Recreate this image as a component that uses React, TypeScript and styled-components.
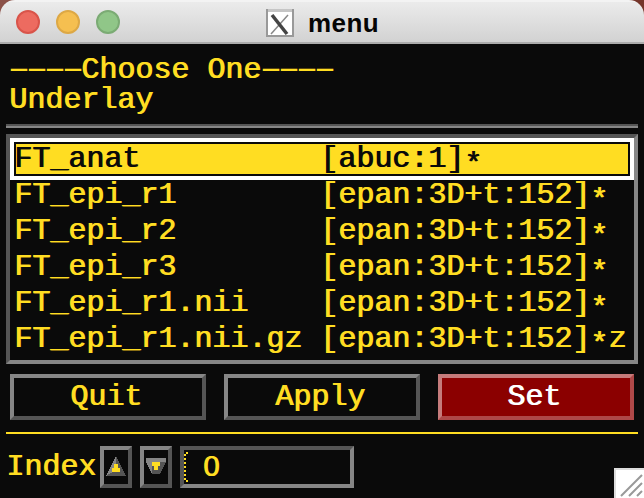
import React from "react";
import styled, { createGlobalStyle, css } from "styled-components";

const INK = "#ffdd22";
const BASE = "#0a0a0a";
const LIGHT = "#868686";
const SHADE = "#555555";

const Global = createGlobalStyle`
  * { box-sizing: border-box; }
  html, body { margin: 0; background: ${BASE}; overflow: hidden; }
`;

const raised = css`
  border: 4px solid;
  border-color: ${LIGHT} ${SHADE} ${SHADE} ${LIGHT};
`;

const sunken = css`
  border: 4px solid;
  border-color: ${SHADE} ${LIGHT} ${LIGHT} ${SHADE};
`;

const Window = styled.main`
  position: relative;
  display: flex;
  flex-direction: column;
  width: 644px;
  height: 498px;
  background: ${BASE};
  color: ${INK};
  font: 30px/30px "Liberation Mono", monospace;
  text-shadow: 1px 0 currentColor;
  white-space: pre;
`;

const Desktop = styled.div`
  flex: none;
  background: linear-gradient(90deg, #8b5148 0 50%, #75352a 50%);
`;

const TitleBar = styled.header`
  display: flex;
  align-items: center;
  height: 44px;
  padding-left: 16px;
  border-bottom: 2px solid #acacac;
  border-radius: 15px 15px 0 0;
  background: linear-gradient(#f3f3f3 0 2px, #ebebeb 2px, #d2d2d2 100%);
`;

const Light = styled.span<{ $fill: string; $edge: string }>`
  width: 24px;
  height: 24px;
  margin: 2px 16px 0 0;
  border: 2px solid ${(p) => p.$edge};
  border-radius: 50%;
  background: ${(p) => p.$fill};
`;

const AppIcon = styled.svg`
  margin: 4px 14px 0 130px;
`;

const Title = styled.h1`
  margin: 4px 0 0;
  color: #050505;
  font: bold 26px/30px "Liberation Sans", sans-serif;
  letter-spacing: 0.4px;
  text-shadow: none;
`;

const Prompt = styled.div`
  height: 80px;
  padding: 11px 0 0 9px;
`;

const Dashes = styled.span`
  display: inline-block;
  width: 36px;
  height: 30px;
  margin-right: 36px;
  vertical-align: top;
  letter-spacing: -9px;
  text-indent: -4px;
  text-shadow: none;
  transform: scaleX(2);
  transform-origin: left;
`;

const Groove = styled.hr`
  flex: none;
  width: 632px;
  height: 4px;
  margin: 0 6px 6px;
  border: 0;
  background: linear-gradient(${SHADE} 50%, ${LIGHT} 50%);
`;

const List = styled.div`
  height: 230px;
  margin: 0 6px 10px;
  ${sunken}
`;

const Row = styled.div<{ $selected?: boolean }>`
  height: 36px;
  padding: 0 0 0 4px;
  ${(p) =>
    p.$selected &&
    css`
      height: 42px;
      padding: 0;
      border: 4px solid #fff;
      background: ${INK};
      color: ${BASE};
      box-shadow: inset 0 0 0 2px ${BASE};
      line-height: 34px;
    `}
`;

const Star = styled.span`
  line-height: 0;
  vertical-align: -6px;
`;

const Actions = styled.div`
  display: flex;
  gap: 18px;
  padding: 0 10px;
`;

const Action = styled.button<{ $primary?: boolean }>`
  width: 196px;
  height: 46px;
  padding: 0 4px 0 0;
  ${raised}
  background: ${BASE};
  color: ${INK};
  font: inherit;
  text-shadow: inherit;
  ${(p) =>
    p.$primary &&
    css`
      border-color: #c57b7b #ae4848 #ae4848 #c57b7b;
      background: #8b0000;
      color: #fff;
      text-shadow: 1px 0 #fff;
    `}
`;

const Rule = styled.hr`
  flex: none;
  width: 632px;
  height: 2px;
  margin: 12px 6px;
  border: 0;
  background: ${INK};
`;

const IndexRow = styled.div`
  display: flex;
  gap: 8px;
  padding-left: 6px;
`;

const Label = styled.label`
  width: 86px;
  padding-top: 6px;
`;

const Step = styled.button`
  width: 32px;
  height: 42px;
  padding: 0;
  ${raised}
  background: ${BASE};
  svg { display: block; }
`;

const Field = styled.div`
  display: flex;
  width: 174px;
  height: 42px;
  ${sunken}
`;

const Digit = styled.span`
  padding: 1px 0 0 15px;
  font-family: "Liberation Sans", sans-serif;
  font-size: 29px;
`;

const Grip = styled.svg`
  position: absolute;
  right: 0;
  bottom: 0;
`;

const rows = [
  ["FT_anat", "[abuc:1]", ""],
  ["FT_epi_r1", "[epan:3D+t:152]", ""],
  ["FT_epi_r2", "[epan:3D+t:152]", ""],
  ["FT_epi_r3", "[epan:3D+t:152]", ""],
  ["FT_epi_r1.nii", "[epan:3D+t:152]", ""],
  ["FT_epi_r1.nii.gz", "[epan:3D+t:152]", "z"],
];

export default function App() {
  return (
    <>
      <Global />
      <Window>
        <Desktop>
          <TitleBar>
            <Light $fill="#ed6b60" $edge="#d9544a" />
            <Light $fill="#f5bf50" $edge="#dda845" />
            <Light $fill="#90c688" $edge="#7bab74" />
            <AppIcon width="28" height="30" viewBox="0 0 28 30">
              <rect x="1" y="2" width="26" height="26" fill="#fff" stroke="#999" strokeWidth="2" />
              <path d="M2 2.500H26" stroke="#c5c5c5" strokeWidth="3" />
              <path d="M22 7L5 26" stroke="#888" strokeWidth="1.500" />
              <path d="M6 7L21 26" stroke="#444" strokeWidth="3.500" />
            </AppIcon>
            <Title>menu</Title>
          </TitleBar>
        </Desktop>
        <Prompt>
          <div><Dashes>----</Dashes>Choose One<Dashes>----</Dashes></div>
          <div>Underlay</div>
        </Prompt>
        <Groove />
        <List>
          {rows.map(([name, info, tail], i) => (
            <Row key={name} $selected={i === 0}>
              {name.padEnd(17)}{info}<Star>*</Star>{tail}
            </Row>
          ))}
        </List>
        <Actions>
          <Action>Quit</Action>
          <Action>Apply</Action>
          <Action $primary>Set</Action>
        </Actions>
        <Rule />
        <IndexRow>
          <Label>Index</Label>
          <Step aria-label="Increase">
            <svg width="24" height="34" shapeRendering="crispEdges">
              <path d="M12 6L2 26H22Z" fill={SHADE} />
              <path d="M12 6L2 26L12 20Z" fill={LIGHT} />
              <path d="M10 14h4v4h2v4H8v-4h2Z" fill={INK} />
            </svg>
          </Step>
          <Step aria-label="Decrease">
            <svg width="24" height="34" shapeRendering="crispEdges">
              <path d="M2 8H22V12L16 24H8L2 12Z" fill={SHADE} />
              <path d="M2 8H22V12H8V24L2 12Z" fill={LIGHT} />
              <path d="M8 12h8v4h-2v4h-4v-4H8Z" fill={INK} />
            </svg>
          </Step>
          <Field>
            <svg width="4" height="34" shapeRendering="crispEdges">
              <path d="M1 4V30" stroke={INK} strokeWidth="2" strokeDasharray="2 2" />
              <path d="M2 2h2v2H2zM2 30h2v2H2z" fill={INK} />
            </svg>
            <Digit>0</Digit>
          </Field>
        </IndexRow>
        <Grip width="30" height="30">
          <path d="M0 0H30V30H0Z" fill="#ddd" />
          <path d="M2 2H30V30H2Z" fill="#fff" />
          <path d="M7 28L28 7M15 28L28 15M23 28L28 23" stroke="#999" strokeWidth="2" />
        </Grip>
      </Window>
    </>
  );
}
